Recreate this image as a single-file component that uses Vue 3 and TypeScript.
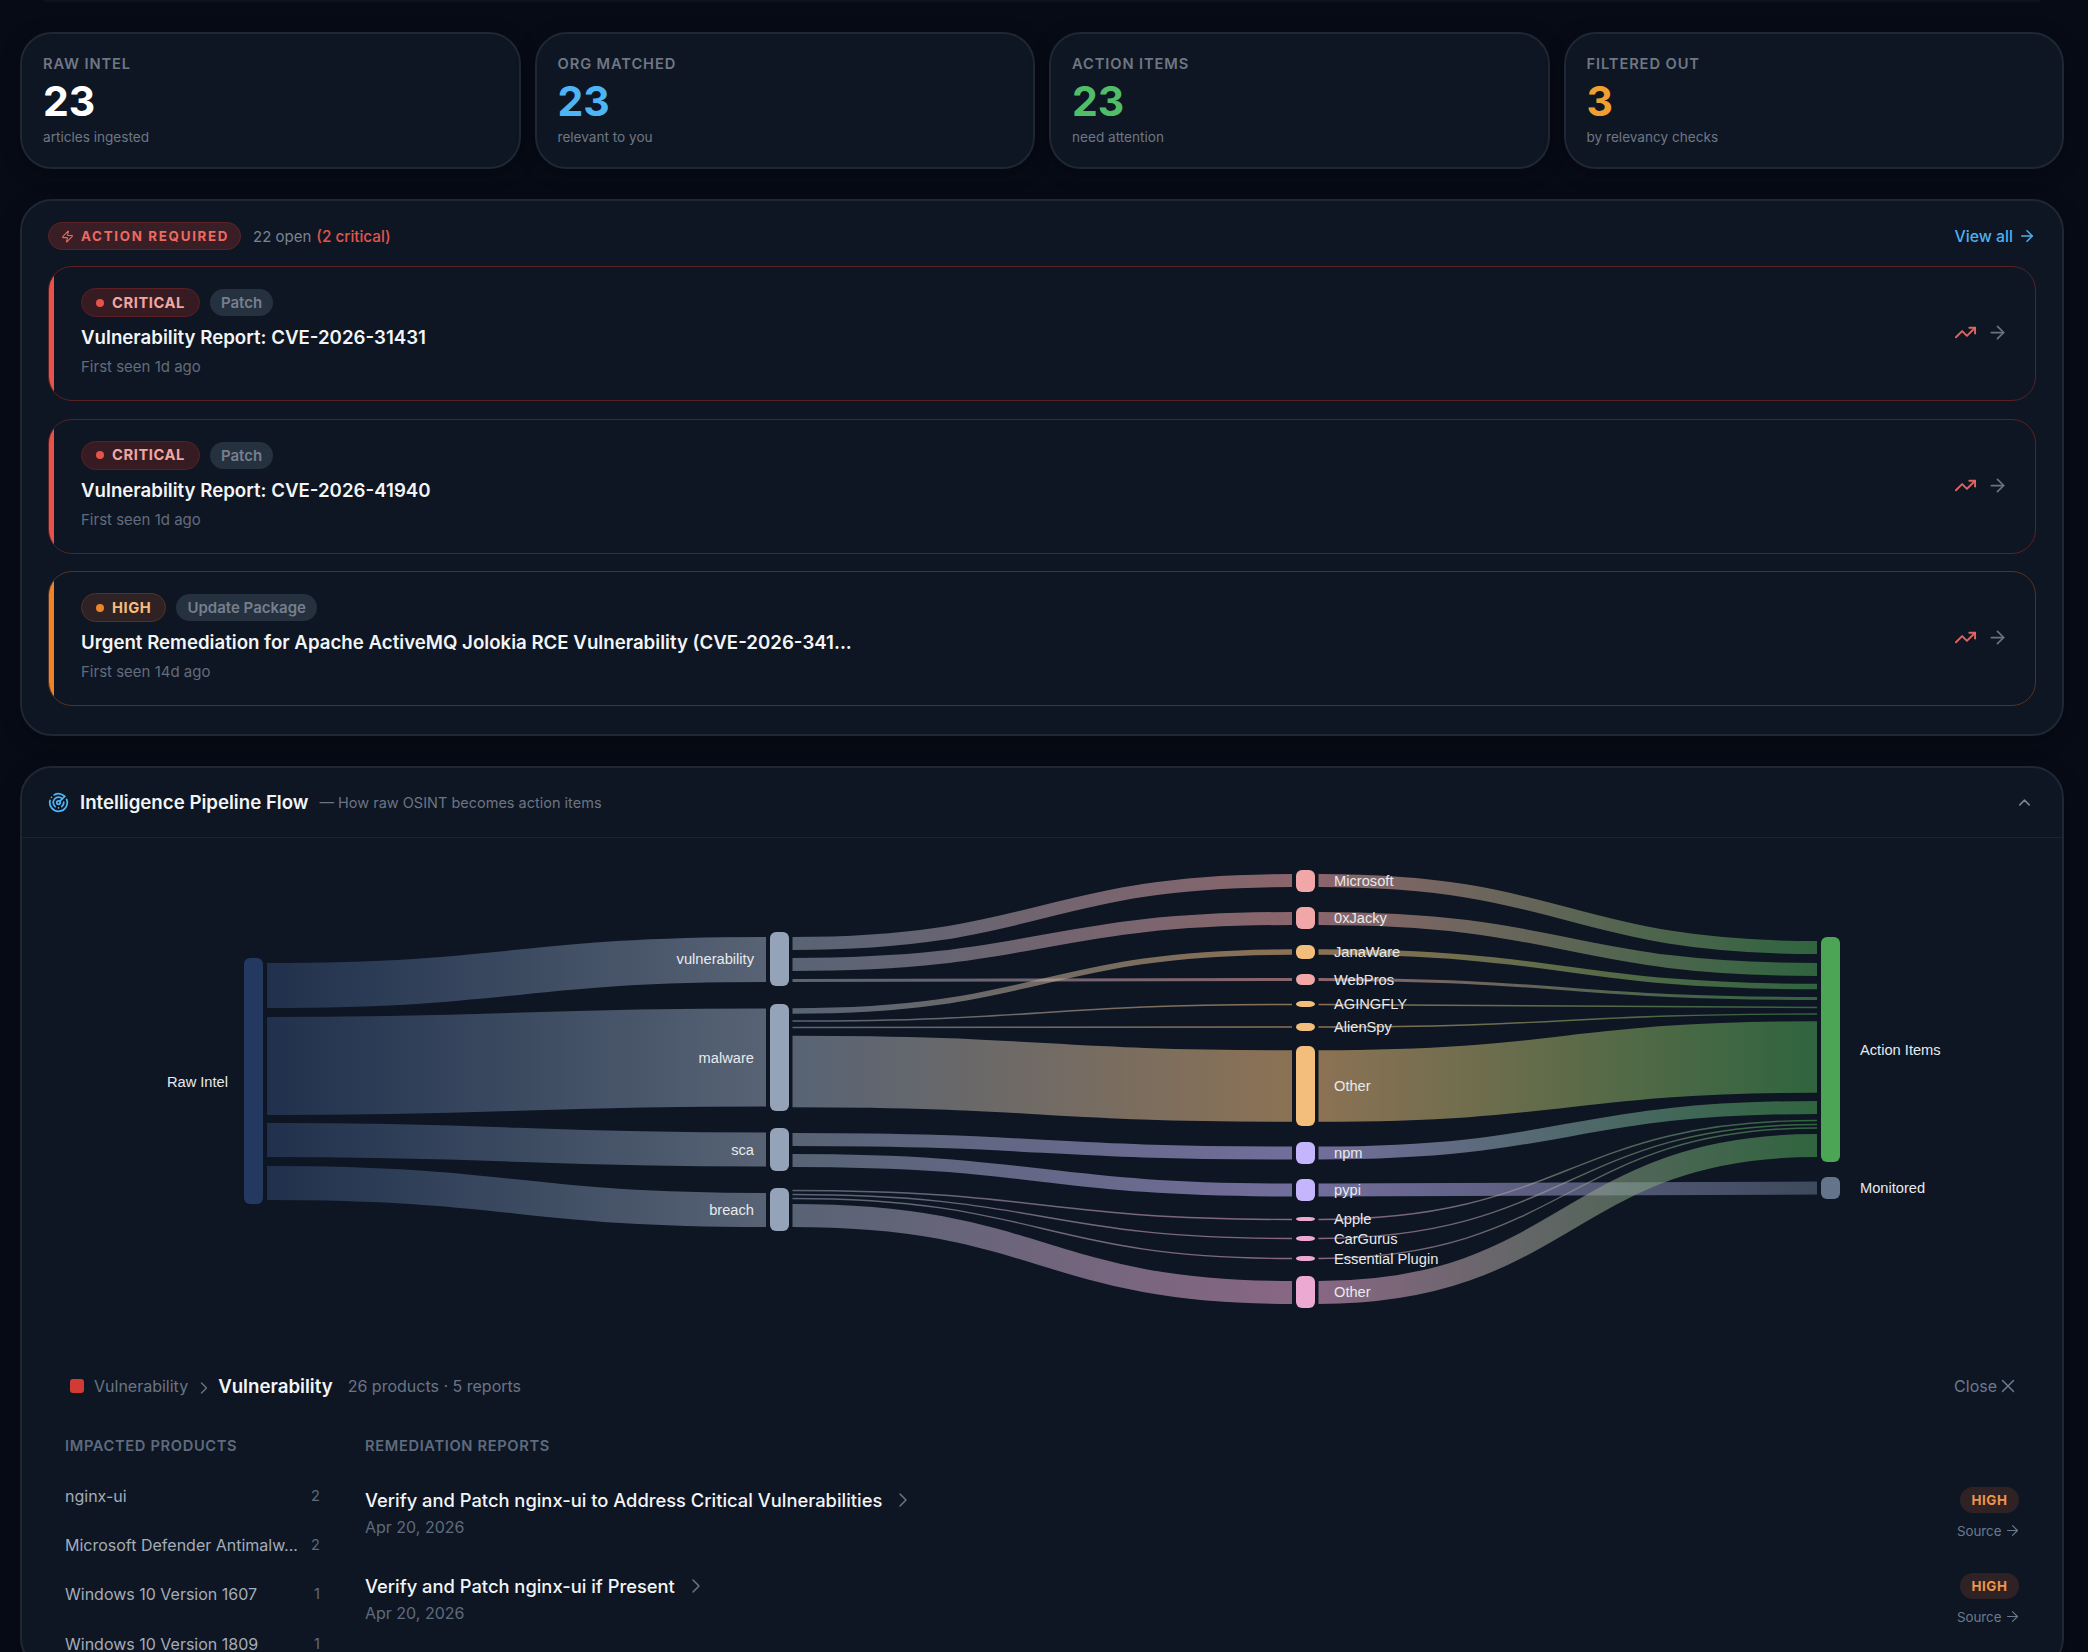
<template>
  <div class="page">
    <div class="top-edge"></div>
    <section class="stats">
      <div v-for="s in stats" :key="s.label" class="stat-card">
        <div class="stat-label">{{ s.label }}</div>
        <div class="stat-value" :class="s.tone">{{ s.value }}</div>
        <div class="stat-sub">{{ s.sub }}</div>
      </div>
    </section>

    <section class="panel actions">
      <header class="actions-head">
        <span class="action-pill">
          <svg class="zap" viewBox="0 0 24 24"><path d="M4 14a1 1 0 0 1-.78-1.63l9.9-10.2a.5.5 0 0 1 .86.46l-1.92 6.02A1 1 0 0 0 13 10h7a1 1 0 0 1 .78 1.63l-9.9 10.2a.5.5 0 0 1-.86-.46l1.92-6.02A1 1 0 0 0 11 14z" /></svg>
          ACTION REQUIRED
        </span>
        <span class="open-count">22 open</span>
        <span class="crit-count">(2 critical)</span>
        <a class="view-all">
          View all
          <svg class="arrow" viewBox="0 0 24 24"><path d="M5 12h14" /><path d="m12 5 7 7-7 7" /></svg>
        </a>
      </header>

      <article v-for="a in alerts" :key="a.title" class="alert" :class="a.level">
        <div class="alert-body">
          <div class="alert-tags">
            <span class="sev-pill"><i class="dot"></i>{{ a.level === 'critical' ? 'CRITICAL' : 'HIGH' }}</span>
            <span class="type-pill">{{ a.type }}</span>
          </div>
          <div class="alert-title">{{ a.title }}</div>
          <div class="alert-meta">{{ a.seen }}</div>
        </div>
        <div class="alert-icons">
          <svg class="trend" viewBox="0 0 24 24"><polyline points="22 7 13.5 15.5 8.5 10.5 2 17" /><polyline points="16 7 22 7 22 13" /></svg>
          <svg class="go" viewBox="0 0 24 24"><path d="M5 12h14" /><path d="m12 5 7 7-7 7" /></svg>
        </div>
      </article>
    </section>

    <section class="panel pipeline">
      <header class="pipe-head">
        <svg class="radar" viewBox="0 0 24 24">
          <path d="M19.07 4.93A10 10 0 0 0 6.99 3.34" />
          <path d="M4 6h.01" />
          <path d="M2.29 9.62A10 10 0 1 0 21.31 8.35" />
          <path d="M16.24 7.76A6 6 0 1 0 8.23 16.67" />
          <path d="M12 18h.01" />
          <path d="M17.99 11.66A6 6 0 0 1 15.77 16.67" />
          <circle cx="12" cy="12" r="2" />
          <path d="m13.41 10.59 5.66-5.66" />
        </svg>
        <span class="pipe-title">Intelligence Pipeline Flow</span>
        <span class="pipe-sub">— How raw OSINT becomes action items</span>
        <svg class="collapse" viewBox="0 0 24 24"><path d="m18 15-6-6-6 6" /></svg>
      </header>

      <svg class="sankey" viewBox="22 838 2040 500" width="2040" height="500">
        <defs>
          <linearGradient v-for="g in gradients" :id="g.id" :key="g.id" gradientUnits="userSpaceOnUse" :x1="g.x0" y1="0" :x2="g.x1" y2="0">
            <stop offset="0" :stop-color="g.from" />
            <stop offset="1" :stop-color="g.to" />
          </linearGradient>
        </defs>
        <path v-for="l in links" :key="l.id" class="link" :d="l.d" :stroke="`url(#${l.grad})`" :stroke-width="l.w" />
        <rect v-for="n in nodes" :key="n.id" class="node" :x="n.x" :y="n.y" width="19" :height="n.h" rx="6" :fill="n.color" />
        <text v-for="n in nodes" :key="'t' + n.id" class="node-label" :x="n.lx" :y="n.ly" :text-anchor="n.anchor">{{ n.label }}</text>
      </svg>

      <div class="detail">
        <div class="crumbs">
          <i class="crumb-dot"></i>
          <span class="crumb-parent">Vulnerability</span>
          <svg class="crumb-sep" viewBox="0 0 24 24"><path d="m9 18 6-6-6-6" /></svg>
          <span class="crumb-current">Vulnerability</span>
          <span class="crumb-count">26 products · 5 reports</span>
          <span class="close">Close
            <svg class="close-x" viewBox="0 0 24 24"><path d="M18 6 6 18" /><path d="m6 6 12 12" /></svg>
          </span>
        </div>

        <div class="detail-grid">
          <div class="products">
            <div class="col-head">IMPACTED PRODUCTS</div>
            <div v-for="p in products" :key="p.name" class="product-row">
              <span class="product-name">{{ p.name }}</span>
              <span class="product-count">{{ p.count }}</span>
            </div>
          </div>
          <div class="reports">
            <div class="col-head">REMEDIATION REPORTS</div>
            <div v-for="r in reports" :key="r.title" class="report-row">
              <div>
                <div class="report-title">
                  {{ r.title }}
                  <svg class="report-chev" viewBox="0 0 24 24"><path d="m9 18 6-6-6-6" /></svg>
                </div>
                <div class="report-date">{{ r.date }}</div>
              </div>
              <div class="report-side">
                <span class="high-pill">HIGH</span>
                <span class="source">Source
                  <svg class="source-arrow" viewBox="0 0 24 24"><path d="M5 12h14" /><path d="m12 5 7 7-7 7" /></svg>
                </span>
              </div>
            </div>
          </div>
        </div>
      </div>
    </section>
  </div>
</template>

<script setup lang="ts">
const stats = [
  { label: 'RAW INTEL', value: '23', sub: 'articles ingested', tone: 'white' },
  { label: 'ORG MATCHED', value: '23', sub: 'relevant to you', tone: 'blue' },
  { label: 'ACTION ITEMS', value: '23', sub: 'need attention', tone: 'green' },
  { label: 'FILTERED OUT', value: '3', sub: 'by relevancy checks', tone: 'orange' },
]

const alerts = [
  { level: 'critical', type: 'Patch', title: 'Vulnerability Report: CVE-2026-31431', seen: 'First seen 1d ago' },
  { level: 'critical', type: 'Patch', title: 'Vulnerability Report: CVE-2026-41940', seen: 'First seen 1d ago' },
  { level: 'high', type: 'Update Package', title: 'Urgent Remediation for Apache ActiveMQ Jolokia RCE Vulnerability (CVE-2026-341...', seen: 'First seen 14d ago' },
]

const products = [
  { name: 'nginx-ui', count: 2 },
  { name: 'Microsoft Defender Antimalw...', count: 2 },
  { name: 'Windows 10 Version 1607', count: 1 },
  { name: 'Windows 10 Version 1809', count: 1 },
]

const reports = [
  { title: 'Verify and Patch nginx-ui to Address Critical Vulnerabilities', date: 'Apr 20, 2026' },
  { title: 'Verify and Patch nginx-ui if Present', date: 'Apr 20, 2026' },
]

// sankey colours
const C = {
  raw: '#30476f',
  slate: '#94a3b8',
  red: '#f1a7a7',
  orange: '#f3bd7c',
  purple: '#c4b5fd',
  pink: '#eca9d2',
  green: '#4ba555',
  mute: '#64748b',
}

type Node = { label: string; col: number; y: number; h: number; color: string }

const colX = [244, 770, 1296, 1821]
const labelX = [228, 754, 1334, 1860]

const rawNodes: Node[] = [
  { label: 'Raw Intel', col: 0, y: 958, h: 246, color: '#24395f' },
  { label: 'vulnerability', col: 1, y: 932, h: 54, color: C.slate },
  { label: 'malware', col: 1, y: 1004, h: 107, color: C.slate },
  { label: 'sca', col: 1, y: 1128, h: 43, color: C.slate },
  { label: 'breach', col: 1, y: 1188, h: 43, color: C.slate },
  { label: 'Microsoft', col: 2, y: 870, h: 22, color: C.red },
  { label: '0xJacky', col: 2, y: 907, h: 22, color: C.red },
  { label: 'JanaWare', col: 2, y: 945, h: 14, color: C.orange },
  { label: 'WebPros', col: 2, y: 974, h: 11, color: C.red },
  { label: 'AGINGFLY', col: 2, y: 1001, h: 6, color: C.orange },
  { label: 'AlienSpy', col: 2, y: 1023, h: 8, color: C.orange },
  { label: 'Other', col: 2, y: 1046, h: 80, color: C.orange },
  { label: 'npm', col: 2, y: 1142, h: 22, color: C.purple },
  { label: 'pypi', col: 2, y: 1179, h: 22, color: C.purple },
  { label: 'Apple', col: 2, y: 1217, h: 4, color: C.pink },
  { label: 'CarGurus', col: 2, y: 1236, h: 5, color: C.pink },
  { label: 'Essential Plugin', col: 2, y: 1256, h: 5, color: C.pink },
  { label: 'Other', col: 2, y: 1276, h: 32, color: C.pink },
  { label: 'Action Items', col: 3, y: 937, h: 225, color: C.green },
  { label: 'Monitored', col: 3, y: 1177, h: 22, color: C.mute },
]

const nodes = rawNodes.map((n, i) => ({
  id: i,
  label: n.label,
  color: n.color,
  x: colX[n.col],
  y: n.y,
  h: n.h,
  lx: labelX[n.col],
  ly: n.y + n.h / 2 + (n.col === 0 ? 6 : 5),
  anchor: n.col < 2 ? 'end' : 'start',
}))

// [y0, y1, width, from, to]
type Row = [number, number, number, string, string]
const stages: { x0: number; x1: number; rows: Row[] }[] = [
  {
    x0: 267,
    x1: 766,
    rows: [
      [985.5, 959.5, 45, C.raw, C.slate],
      [1066, 1057.5, 98, C.raw, C.slate],
      [1140, 1149.5, 34, C.raw, C.slate],
      [1183, 1210, 34, C.raw, C.slate],
    ],
  },
  {
    x0: 792.5,
    x1: 1292,
    rows: [
      [943.5, 880.5, 13, C.slate, C.red],
      [964.5, 918.5, 13, C.slate, C.red],
      [980.5, 979.5, 3, C.slate, C.red],
      [1011, 952, 5.5, C.slate, C.orange],
      [1021, 1004.5, 1.5, C.slate, C.orange],
      [1027.5, 1027, 1.5, C.slate, C.orange],
      [1071.5, 1086, 71.5, C.slate, C.orange],
      [1139.5, 1153, 13, C.slate, C.purple],
      [1160.5, 1190, 13, C.slate, C.purple],
      [1190.5, 1219.5, 1.4, C.slate, C.pink],
      [1194.5, 1238.5, 1.4, C.slate, C.pink],
      [1198.5, 1258.5, 1.4, C.slate, C.pink],
      [1215.5, 1292.5, 23, C.slate, C.pink],
    ],
  },
  {
    x0: 1318.5,
    x1: 1817,
    rows: [
      [880.5, 947.5, 13, C.red, C.green],
      [918.5, 969.5, 13, C.red, C.green],
      [952, 986.5, 5.5, C.orange, C.green],
      [979.5, 998.5, 3, C.red, C.green],
      [1004.5, 1007.5, 1.4, C.orange, C.green],
      [1027, 1014, 1.4, C.orange, C.green],
      [1086, 1057, 71.5, C.orange, C.green],
      [1153, 1107.5, 13, C.purple, C.green],
      [1190, 1188, 13, C.purple, C.mute],
      [1219.5, 1120.5, 1.4, C.pink, C.green],
      [1238.5, 1124.5, 1.4, C.pink, C.green],
      [1258.5, 1128, 1.4, C.pink, C.green],
      [1292.5, 1145.5, 23, C.pink, C.green],
    ],
  },
]

const gradients: { id: string; x0: number; x1: number; from: string; to: string }[] = []
const links: { id: string; d: string; w: number; grad: string }[] = []

stages.forEach((s, si) => {
  s.rows.forEach((r, ri) => {
    const grad = `g${si}-${r[3].slice(1)}-${r[4].slice(1)}`
    if (!gradients.some((g) => g.id === grad)) {
      gradients.push({ id: grad, x0: s.x0, x1: s.x1, from: r[3], to: r[4] })
    }
    const mid = (s.x0 + s.x1) / 2
    links.push({
      id: `${si}-${ri}`,
      d: `M${s.x0},${r[0]}C${mid},${r[0]} ${mid},${r[1]} ${s.x1},${r[1]}`,
      w: r[2],
      grad,
    })
  })
})
</script>

<style>
html,
body {
  margin: 0;
  background: #070b16;
}
</style>

<style scoped>
.page {
  height: 1652px;
  overflow: hidden;
  box-sizing: border-box;
  padding: 0 24px 0 20px;
  background: #070b16;
  font-family: Inter, 'Noto Sans', sans-serif;
  color: #e5e7eb;
}

svg {
  fill: none;
  stroke: currentColor;
  stroke-linecap: round;
  stroke-linejoin: round;
  stroke-width: 2;
}

.top-edge {
  height: 2px;
  margin: 0 24px 30px 24px;
  background: #0c1320;
}

/* Stats */
.stats {
  display: grid;
  grid-template-columns: repeat(4, 1fr);
  gap: 14px;
}

.stat-card {
  height: 137px;
  box-sizing: border-box;
  padding: 21px 21px 0;
  background: #0e1623;
  border: 2px solid #1f2733;
  border-radius: 32px;
  box-shadow: 0 4px 20px rgba(0, 0, 0, 0.3);
}

.stat-label {
  font-size: 14.67px;
  line-height: 18px;
  font-weight: 600;
  letter-spacing: 0.9px;
  color: #6f7785;
}

.stat-value {
  margin-top: 6px;
  font-size: 41px;
  line-height: 44px;
  font-weight: 700;
}

.white { color: #ffffff; }
.blue { color: #4db5f5; }
.green { color: #52bd68; }
.orange { color: #f0a030; }

.stat-sub {
  margin-top: 6px;
  font-size: 13.6px;
  line-height: 17px;
  color: #6f7785;
}

/* Panels */
.panel {
  background: #0e1623;
  border: 2px solid #1f2733;
  border-radius: 32px;
  box-shadow: 0 4px 20px rgba(0, 0, 0, 0.3);
}

.actions {
  margin-top: 30px;
  padding: 21px 26px 28px;
}

.actions-head {
  display: flex;
  align-items: center;
  height: 28px;
  margin-bottom: 16px;
}

.action-pill {
  display: inline-flex;
  align-items: center;
  gap: 7px;
  box-sizing: border-box;
  width: 193px;
  height: 28px;
  padding-left: 12px;
  background: #3a1e25;
  border: 1px solid #5b2328;
  border-radius: 14px;
  font-size: 13.33px;
  font-weight: 700;
  letter-spacing: 1.7px;
  color: #ec6a62;
}

.zap {
  width: 13px;
  height: 13px;
  stroke-width: 2;
}

.open-count {
  margin-left: 12px;
  font-size: 15px;
  color: #7b8391;
}

.crit-count {
  margin-left: 5px;
  font-size: 15.3px;
  font-weight: 500;
  color: #e5534b;
}

.view-all {
  margin-left: auto;
  display: inline-flex;
  align-items: center;
  gap: 5px;
  font-size: 15.8px;
  font-weight: 500;
  color: #4db1ef;
}

.arrow {
  width: 18px;
  height: 18px;
}

.alert {
  position: relative;
  overflow: hidden;
  display: flex;
  align-items: center;
  height: 135px;
  box-sizing: border-box;
  margin-bottom: 17.5px;
  padding-left: 32px;
  padding-right: 27px;
  border: 1px solid;
  border-radius: 24px;
  background: #0e1623;
}

.alert::before {
  content: '';
  position: absolute;
  left: 0;
  top: 0;
  bottom: 0;
  width: 5px;
}

.alert:last-child {
  margin-bottom: 0;
}

.alert.critical {
  border-color: #5a2024;
}

.alert.critical::before {
  background: #e5534b;
}

.alert.high {
  border-color: #553222;
}

.alert.high::before {
  background: #ee8427;
}

.alert-body {
  flex: 1;
  align-self: flex-start;
  padding-top: 21px;
}

.alert-tags {
  display: flex;
  align-items: center;
  gap: 10px;
  height: 29px;
}

.sev-pill {
  display: inline-flex;
  align-items: center;
  gap: 8px;
  box-sizing: border-box;
  height: 29px;
  padding: 0 14px;
  border-radius: 15px;
  font-size: 14.67px;
  font-weight: 700;
  letter-spacing: 0.6px;
}

.critical .sev-pill {
  background: #361c22;
  border: 1px solid #5a2024;
  color: #f2a6a2;
}

.high .sev-pill {
  background: #2f2224;
  border: 1px solid #553222;
  color: #f6bd80;
}

.dot {
  width: 8px;
  height: 8px;
  border-radius: 50%;
}

.critical .dot { background: #e5534b; }
.high .dot { background: #ee8427; }

.type-pill {
  display: inline-flex;
  align-items: center;
  height: 27px;
  padding: 0 11px;
  border-radius: 14px;
  background: #263140;
  font-size: 15px;
  font-weight: 600;
  color: #767f8d;
}

.alert-title {
  margin-top: 8px;
  font-size: 18.67px;
  line-height: 26px;
  font-weight: 600;
  color: #f3f4f6;
}

.alert-meta {
  margin-top: 6px;
  font-size: 15px;
  line-height: 20px;
  color: #626c7c;
}

.alert-icons {
  display: flex;
  align-items: center;
  gap: 10px;
  padding-bottom: 2px;
}

.trend {
  width: 23px;
  height: 23px;
  color: #e0655f;
}

.go {
  width: 21px;
  height: 21px;
  color: #6b7280;
}

/* Pipeline */
.pipeline {
  margin-top: 30px;
}

.pipe-head {
  display: flex;
  align-items: center;
  height: 69px;
  padding: 0 28px 0 26px;
  border-bottom: 1px solid #1b2330;
}

.radar {
  width: 21px;
  height: 21px;
  color: #4db5f5;
  margin-right: 11px;
}

.pipe-title {
  font-size: 18.67px;
  font-weight: 600;
  color: #f3f4f6;
}

.pipe-sub {
  margin-left: 11px;
  font-size: 14.5px;
  color: #6b7484;
}

.collapse {
  margin-left: auto;
  width: 19px;
  height: 19px;
  color: #7b8391;
}

.sankey {
  display: block;
}

.link {
  fill: none;
  stroke-linecap: butt;
  stroke-opacity: 0.55;
}

.node {
  stroke: none;
}

.node-label {
  font-family: 'Liberation Sans', Arial, sans-serif;
  font-size: 14.67px;
  fill: #e8eaed;
  stroke: none;
}

.detail {
  padding: 34px 43px 0;
}

.crumbs {
  display: flex;
  align-items: center;
  height: 28px;
  padding-left: 5px;
}

.crumb-dot {
  width: 14px;
  height: 14px;
  border-radius: 3px;
  background: #d13b33;
  margin-right: 10px;
}

.crumb-parent {
  font-size: 16px;
  color: #6b7484;
}

.crumb-sep {
  width: 20px;
  height: 20px;
  margin: 4px 4px 0 6px;
  stroke-width: 1.6;
  color: #6b7484;
}

.crumb-current {
  font-size: 18.67px;
  font-weight: 600;
  color: #f3f4f6;
}

.crumb-count {
  margin-left: 15px;
  font-size: 16px;
  color: #6b7484;
}

.close {
  margin-left: auto;
  display: inline-flex;
  align-items: center;
  font-size: 16px;
  color: #6b7a90;
}

.close-x {
  width: 22px;
  height: 22px;
  stroke-width: 1.6;
}

.detail-grid {
  display: grid;
  grid-template-columns: 255px 1fr;
  gap: 45px;
  margin-top: 37px;
}

.col-head {
  font-size: 14.67px;
  line-height: 18px;
  font-weight: 600;
  letter-spacing: 0.65px;
  color: #5e6b7e;
  margin-bottom: 16px;
}

.product-row {
  display: flex;
  align-items: center;
  justify-content: space-between;
  height: 49.33px;
  font-size: 16px;
  color: #a3acb9;
}

.product-count {
  font-size: 14.67px;
  color: #5e6b7e;
}

.report-row {
  display: flex;
  justify-content: space-between;
  height: 86px;
  box-sizing: border-box;
  padding-top: 16px;
}

.report-title {
  display: flex;
  align-items: center;
  gap: 9px;
  font-size: 18.33px;
  line-height: 26px;
  font-weight: 500;
  color: #f3f4f6;
}

.report-chev {
  width: 24px;
  height: 24px;
  stroke-width: 1.5;
  color: #6b7484;
}

.report-date {
  margin-top: 4px;
  font-size: 16px;
  line-height: 20px;
  color: #5e6b7e;
}

.report-side {
  display: flex;
  flex-direction: column;
  align-items: flex-end;
  gap: 9px;
}

.high-pill {
  display: inline-flex;
  align-items: center;
  height: 26px;
  padding: 0 11.5px;
  border-radius: 13px;
  background: #2f2224;
  font-size: 13.33px;
  font-weight: 700;
  letter-spacing: 0.6px;
  color: #f0954a;
}

.source {
  display: inline-flex;
  align-items: center;
  gap: 2px;
  margin-right: -1.5px;
  font-size: 13.33px;
  color: #6b7a90;
}

.source-arrow {
  width: 17px;
  height: 17px;
  stroke-width: 1.6;
}
</style>
